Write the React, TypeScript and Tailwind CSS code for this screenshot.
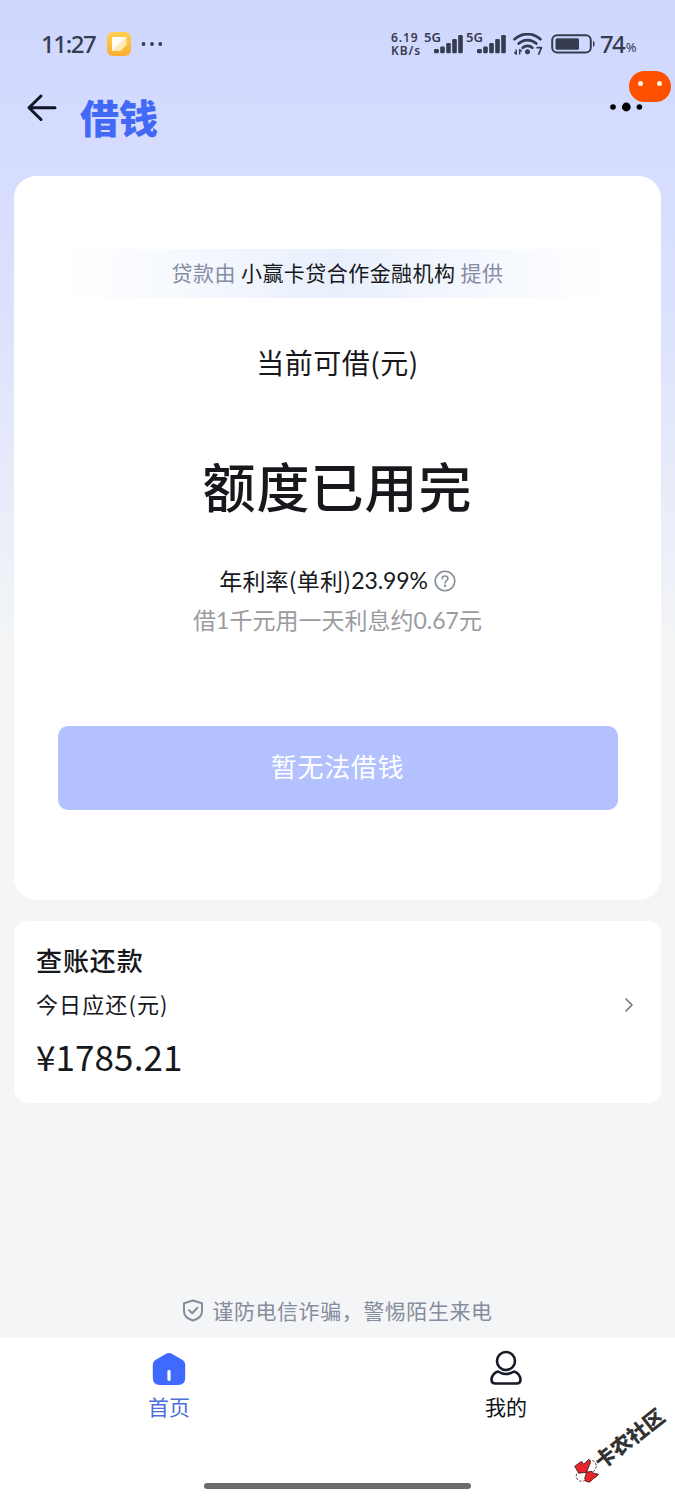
import { ChevronRight } from 'lucide-react';

function SignalBars() {
  return (
    <svg className="h-[19px] w-[29px]" viewBox="0 0 29 19" fill="#363c50">
      <rect x="0" y="14" width="4.8" height="4.2" rx="1.2" />
      <rect x="6.2" y="11.5" width="4.6" height="6.7" rx="1.2" />
      <rect x="12.2" y="8" width="4.6" height="10.2" rx="1.2" />
      <rect x="18.2" y="4" width="4.6" height="14.2" rx="1.2" />
      <rect x="24.2" y="0" width="4.6" height="18.2" rx="1.2" />
    </svg>
  );
}

function StatusBar() {
  return (
    <div className="flex h-[88px] items-center pl-[41px] text-[#363c50] font-['Noto_Sans',sans-serif]">
      <span className="w-[66px] whitespace-nowrap text-[24px] leading-none font-medium tracking-[-1.4px]">11:27</span>
      <svg className="h-6 w-6" viewBox="0 0 24 24">
        <defs>
          <linearGradient id="note" x1="0" y1="0" x2="0" y2="1">
            <stop offset="0" stopColor="#ffd04d" />
            <stop offset="1" stopColor="#f9ae35" />
          </linearGradient>
        </defs>
        <rect width="24" height="24" rx="6" fill="url(#note)" />
        <path d="M5 5h14.5v8l-6 6H5z" fill="#ffe9ae" />
        <path d="M5 5h14.5L5 19z" fill="#fffdf5" />
      </svg>
      <svg className="ml-[10px] h-1 w-[22px]" viewBox="0 0 22 4" fill="#363c50">
        <circle cx="2.5" cy="2" r="1.9" />
        <circle cx="11" cy="2" r="1.9" />
        <circle cx="19.3" cy="2" r="1.9" />
      </svg>
      <div className="ml-[228px] flex w-[33px] flex-col gap-px whitespace-nowrap text-[12px] leading-[12px] font-semibold">
        <span className="tracking-[0.9px]">6.19</span>
        <span className="tracking-[0.9px]">KB/s</span>
      </div>
      <span className="mt-[-14px] w-[10px] whitespace-nowrap text-[13px] leading-none font-semibold">5G</span>
      <SignalBars />
      <span className="mt-[-14px] ml-[3px] w-[11px] whitespace-nowrap text-[13px] leading-none font-semibold">5G</span>
      <SignalBars />
      <svg className="ml-[7px] h-[22px] w-[30px]" viewBox="0 0 30 22" fill="none" stroke="#363c50" strokeWidth="2.7" strokeLinecap="round">
        <path d="M1.5 6.2C9-.5 20-.5 27.5 6.2" />
        <path d="M5.7 10.6c5-4.7 12.6-4.7 17.6 0" />
        <path d="M9.7 14.8c2.7-2.6 7-2.6 9.7 0" />
        <circle cx="14.5" cy="18.8" r="2.5" fill="#363c50" stroke="none" />
        <path d="M3.2 17v4M6.7 16.5v4.5M1.8 19.5l1.4 1.7M6.7 16.5l1.5 1.500" strokeWidth="1.5" />
        <path d="M24.2 14.700h4.200l-2.600 6.300" strokeWidth="1.8" strokeLinejoin="round" />
      </svg>
      <svg className="ml-[8px] h-5 w-[46px]" viewBox="0 0 46 20">
        <rect x="1.2" y="1.2" width="38.6" height="17.2" rx="5" fill="none" stroke="#363c50" strokeWidth="2" />
        <rect x="4.5" y="4.2" width="23.500" height="11.500" rx="1.500" fill="#363c50" />
        <path d="M42 6.500q3.500 3.300 0 6.500z" fill="#363c50" />
      </svg>
      <span className="ml-[3px] whitespace-nowrap text-[24px] leading-none font-medium tracking-[-1.8px]">74</span>
      <span className="mt-[6px] ml-[2px] text-[13px] leading-none">%</span>
    </div>
  );
}

function NavBar() {
  return (
    <div className="relative flex h-[88px] items-start pl-[25px]">
      <svg className="mt-[3px] h-[34px] w-[34px]" viewBox="0 0 34 34" fill="none" stroke="#111528" strokeWidth="3" strokeLinecap="round" strokeLinejoin="round">
        <path d="M16 5L4 16.700 16 28.500M4.500 16.700H30" />
      </svg>
      <h1 className="mt-[6px] ml-[21px] text-[39px] leading-[44px] font-black text-[#4169f5]">借钱</h1>
      <svg className="absolute top-[14px] right-[32px] h-[10px] w-[34px]" viewBox="0 0 34 10">
        <circle cx="4" cy="5" r="2.8" />
        <circle cx="17.3" cy="5" r="4.4" />
        <circle cx="30.4" cy="5" r="2.8" />
      </svg>
      <div className="absolute top-[-17px] right-[4px] flex h-[31px] w-[42px] justify-between rounded-[16px] bg-[#ff5000] px-[9px] pt-[10px]">
        <span className="h-[5px] w-[5px] rounded-full bg-[#fff3dc]" />
        <span className="h-[5px] w-[5px] rounded-full bg-[#fff3dc]" />
      </div>
    </div>
  );
}

function CreditCard() {
  return (
    <section className="mx-[14px] flex h-[724px] flex-col items-center rounded-[22px] bg-white pt-[73px] text-[#17181c]">
      <div className="flex h-[49px] w-[550px] items-center justify-center gap-[5px] bg-linear-to-r from-white via-[#e9f0fc] to-white pb-[1px] text-[21px] tracking-[0.45px] whitespace-nowrap text-[#858ca3]">
        <span>贷款由</span>
        <span className="text-[#17181c]">小赢卡贷合作金融机构</span>
        <span>提供</span>
      </div>
      <div className="mt-[46px] text-[28px] leading-[36px] tracking-[0.5px]">当前可借(元)</div>
      <div className="mt-[70px] text-[53px] leading-[70px] font-medium tracking-[1px]">额度已用完</div>
      <div className="mt-[45px] flex items-center text-[23px] leading-[30px]">
        <span className="tracking-[0.2px]">年利率(单利)</span>
        <span className="font-['Lato',sans-serif] text-[23px] tracking-[-0.1px]">23.99%</span>
        <svg className="mt-[1px] ml-[6px] h-[22px] w-[22px]" viewBox="0 0 22 22" fill="none" stroke="#858c9c" strokeWidth="1.6" strokeLinecap="round">
          <circle cx="11" cy="11" r="9.8" />
          <path d="M8.200 8.700c.1-3.600 5.700-3.500 5.700-.1 0 2.100-2.800 2.200-2.800 4.400" />
          <circle cx="11.1" cy="15.7" r=".5" fill="#858c9c" />
        </svg>
      </div>
      <div className="mt-[10px] text-[23px] leading-[30px] text-[#9b9b9f] font-['Lato','Noto_Sans_CJK_SC',sans-serif]">
        借1千元用一天利息约0.67元
      </div>
      <button className="mt-[91px] h-[84px] w-[560px] rounded-[10px] bg-[#b3c1ff] pb-[5px] text-[26px] tracking-[0.7px] text-white">
        暂无法借钱
      </button>
    </section>
  );
}

function RepayCard() {
  return (
    <section className="mx-[14px] mt-[21px] flex h-[182px] items-center justify-between rounded-[14px] bg-white pr-[20px] pl-[22px] text-[#17181c]">
      <div className="flex h-full flex-col pt-[22px]">
        <h2 className="text-[26px] leading-[34px] font-medium tracking-[0.9px]">查账还款</h2>
        <div className="mt-[11px] text-[22px] leading-[30px] tracking-[1.1px]">今日应还(元)</div>
        <div className="mt-[16px] text-[35px] leading-[44px] tracking-[0.1px]">¥1785.21</div>
      </div>
      <ChevronRight className="-mt-[14px] h-6 w-6 text-[#77787c]" strokeWidth={1.7} />
    </section>
  );
}

function Watermark() {
  return (
    <div className="absolute right-[2px] bottom-[42px] flex w-[108px] rotate-[-38deg] items-center">
      <svg className="h-[26px] w-[26px] shrink-0 rotate-[38deg]" viewBox="0 0 26 26" stroke="#3a1414" strokeWidth="0.8">
        <ellipse cx="17" cy="9" rx="5.5" ry="6" fill="#fff" strokeDasharray="2.500 1.500" />
        <ellipse cx="8" cy="19" rx="5.5" ry="5" fill="#fff" strokeDasharray="2.500 1.500" />
        <path d="M1 9l7-5 2 3 5-5 2 3-3 7-1 3-8 1z" fill="#e3262b" />
        <path d="M13 15l5-1 2 2 5 1-3 3-2 1-4 4-4-1-1-3z" fill="#e3262b" />
      </svg>
      <span className="-ml-px text-[20.5px] leading-[24px] font-black whitespace-nowrap text-[#333]">卡农社区</span>
    </div>
  );
}

function TabBar() {
  return (
    <nav className="relative flex h-[162px] justify-between bg-white px-[119px] pt-[12px] text-[21px] leading-[28px]">
      <div className="flex w-[100px] flex-col items-center text-[#4a6fdc]">
        <svg className="h-[38px] w-[38px]" viewBox="0 0 38 38">
          <path d="M15.300 4.200q3.700-2.400 7.400 0l9.500 5.500q3 1.800 3 5.200V28q0 7-7 7H9.800q-7 0-7-7V14.900q0-3.400 3-5.200z" fill="#406aff" />
          <rect x="17.400" y="20" width="3.200" height="11" rx="1.400" fill="#fff" />
        </svg>
        <span className="mt-[4px]">首页</span>
      </div>
      <div className="flex w-[100px] flex-col items-center text-[#111319]">
        <svg className="h-[38px] w-[38px]" viewBox="0 0 38 38" fill="none" stroke="#171a26" strokeWidth="2.6">
          <circle cx="19" cy="11" r="9" />
          <path d="M11 21.500C7 22.500 4.500 26.500 4.500 29.500q0 4 4 4h21q4 0 4-4c0-3-2.500-7-6.500-8q-8 5-16 0z" strokeLinejoin="round" />
        </svg>
        <span className="mt-[4px]">我的</span>
      </div>
      <div className="absolute bottom-[11px] left-[204px] h-[6px] w-[267px] rounded-full bg-[#6c6c6e]" />
      <Watermark />
    </nav>
  );
}

export default function App() {
  return (
    <div className="flex h-[1500px] w-[675px] flex-col overflow-hidden bg-[#f3f5f6] bg-linear-to-b from-[#cfd7ff] via-[#dbe1fd] via-20% to-[#f3f5f6] to-43% font-['Noto_Sans_CJK_SC',sans-serif]">
      <StatusBar />
      <NavBar />
      <CreditCard />
      <RepayCard />
      <div className="mt-auto mb-[13px] flex items-center justify-center gap-[8px] text-[21px] leading-[30px] tracking-[0.55px] text-[#858c9c]">
        <svg className="h-[23px] w-[22px]" viewBox="0 0 22 23" fill="none" stroke="#858c9c" strokeWidth="2" strokeLinecap="round" strokeLinejoin="round">
          <path d="M11 1.500l9 2.800v8.200c0 4.500-4 7.500-9 9-5-1.500-9-4.500-9-9V4.300z" />
          <path d="M7 11.200l3.200 3 5.300-5.400" />
        </svg>
        <span>谨防电信诈骗，警惕陌生来电</span>
      </div>
      <TabBar />
    </div>
  );
}
